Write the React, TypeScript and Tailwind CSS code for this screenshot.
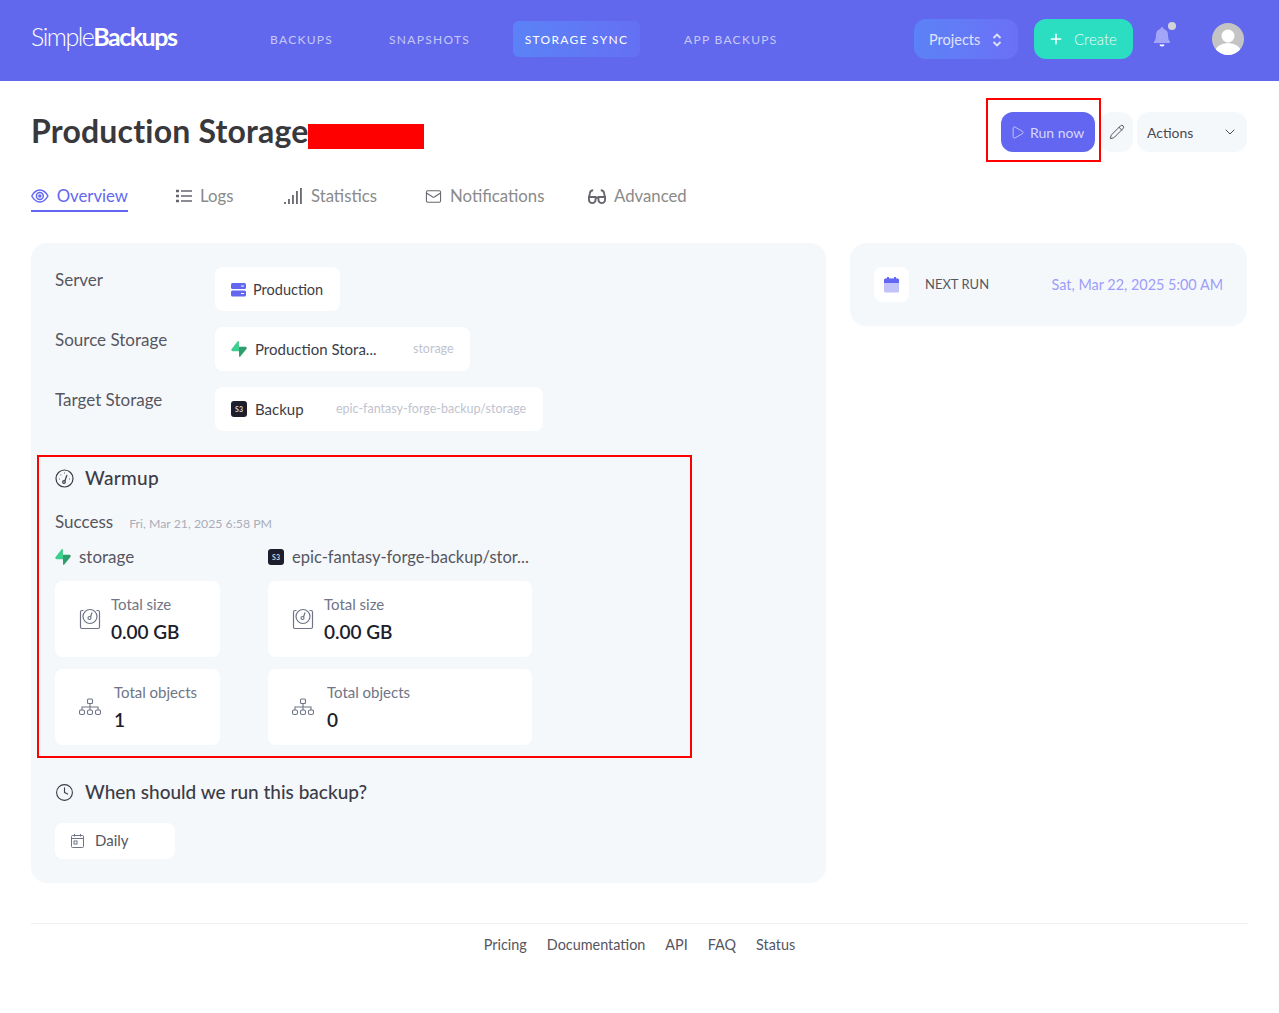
import { ChevronDown, Clock, Mail, Pencil, Play, Plus } from 'lucide-react'

function SupabaseIcon({ className }: { className: string }) {
  return (
    <svg className={className} viewBox="0 0 109 113" fill="none">
      <path d="M63.7 110.3C60.8 113.9 55 111.9 55 107.3L54 40.1H99.2C107.4 40.1 112 49.5 106.9 55.9L63.7 110.3Z" fill="#2f9e6f" />
      <path d="M45.3 2.1C48.2-1.5 54 .4 54 5L54.5 72.3H9.8C1.6 72.3-2.9 62.8 2.2 56.4L45.3 2.1Z" fill="#3ecf8e" />
    </svg>
  )
}

function S3Icon() {
  return (
    <span className="flex h-4 w-4 shrink-0 items-center justify-center rounded-[3px] bg-[#1d1d2b] text-[7px] font-bold text-[#d6d6dc]">
      S3
    </span>
  )
}

function DiskIcon() {
  return (
    <svg className="h-[22px] w-[22px] shrink-0 text-[#6f7486]" viewBox="0 0 22 22" fill="none" stroke="currentColor" strokeWidth="1.200">
      <path d="M4.500 2.500H3a1.500 1.500 0 0 0-1.500 1.500v15A1.500 1.500 0 0 0 3 20.500h16a1.500 1.500 0 0 0 1.500-1.500V4A1.500 1.500 0 0 0 19 2.500h-1.500" />
      <circle cx="11" cy="8.500" r="7" />
      <circle cx="10.500" cy="10" r="1.500" />
      <path d="M11.500 9l1.500-4.500" />
    </svg>
  )
}

function TreeIcon() {
  return (
    <svg className="h-[22px] w-[22px] shrink-0 text-[#6f7486]" viewBox="0 0 22 18" fill="none" stroke="currentColor" strokeWidth="1.100">
      <rect x="8.500" y="1" width="5" height="4.500" rx="1" />
      <rect x=".5" y="12" width="5" height="4.500" rx="1.500" />
      <rect x="8.500" y="12" width="5" height="4.500" rx="1.500" />
      <rect x="16.500" y="12" width="5" height="4.500" rx="1.500" />
      <path d="M11 5.500V12M3 12V9h16v3" />
    </svg>
  )
}

function StatCard({ wide, label, value, icon }: { wide?: boolean; label: string; value: string; icon: 'disk' | 'tree' }) {
  return (
    <div className={`flex h-[76px] items-center rounded-lg bg-white pl-6 ${wide ? 'w-[264px]' : 'w-[165px]'} ${icon === 'disk' ? 'gap-[10px]' : 'gap-[13px]'}`}>
      {icon === 'disk' ? <DiskIcon /> : <TreeIcon />}
      <div>
        <div className="text-[15px] leading-5 text-[#6f7486]">{label}</div>
        <div className="mt-[6px] text-[19px] leading-6 font-semibold text-[#1a202c]">{value}</div>
      </div>
    </div>
  )
}

function Tab({ icon, label, active, width }: { icon: React.ReactNode; label: string; active?: boolean; width: string }) {
  return (
    <div className={`flex h-[30px] items-center gap-2 border-b-2 text-[16.750px] whitespace-nowrap ${width} ${active ? 'border-[#6366f1] text-[#6366f1]' : 'border-transparent text-[#8a8a8a]'}`}>
      {icon}
      {label}
    </div>
  )
}

function Row({ label, children }: { label: string; children: React.ReactNode }) {
  return (
    <div className="flex">
      <div className="w-40 pt-[3px] text-[17px] leading-5 text-[#55565f]">{label}</div>
      {children}
    </div>
  )
}

export default function App() {
  return (
    <div className="relative min-h-[1013px] bg-white [font-family:Lato,sans-serif]">
      <header className="flex h-[81px] items-center bg-[#6268ed] pr-[35px] pb-[3px] pl-[31px]">
        <div className="mb-1 w-[239px] text-[25px] tracking-[-1.500px] text-white">
          <span className="font-light">Simple</span>
          <span className="font-bold">Backups</span>
        </div>
        <nav className="flex items-center text-[12px] tracking-[1.300px] text-[#c5c9f7]">
          <a className="w-[119px] pt-[2px]">BACKUPS</a>
          <a className="w-[124px] pt-[2px]">SNAPSHOTS</a>
          <a className="flex h-9 w-[127px] items-center justify-center rounded-md bg-gradient-to-r from-[#5b82f6] to-[#6470f3] pt-px text-white">STORAGE SYNC</a>
          <a className="ml-[44px] pt-[2px]">APP BACKUPS</a>
        </nav>
        <div className="ml-auto flex items-center">
          <button className="flex h-10 w-[104px] items-center justify-between rounded-xl bg-gradient-to-r from-[#5b82f6] to-[#6b70f6] pt-px pr-[14px] pl-[15px] text-[14.500px] text-[#e0e3fc]">
            Projects
            <svg className="h-[14px] w-[14px]" viewBox="0 0 14 14" fill="none" stroke="currentColor" strokeWidth="1.800"><path d="M3.500 5L7 1.500 10.500 5M3.500 9L7 12.500 10.500 9" /></svg>
          </button>
          <button className="ml-4 flex h-10 w-[99px] items-center gap-[10px] rounded-xl bg-[#2bddc1] pl-[14px] text-[15px] font-light text-[#f0fcfa]">
            <Plus className="h-[16px] w-[16px] text-white" strokeWidth={2.200} />
            Create
          </button>
          <div className="relative ml-[19px] h-6 w-6">
            <svg className="h-5 w-5 text-[#a3a6f8]" viewBox="0 0 20 20" fill="currentColor">
              <path d="M10 0a1.500 1.500 0 0 0-1.500 1.500v.6A6 6 0 0 0 4 8c0 4-1 5.500-2 6.500V16h16v-1.500c-1-1-2-2.500-2-6.500a6 6 0 0 0-4.500-5.900v-.6A1.500 1.500 0 0 0 10 0z" />
              <path d="M7.500 17.500h5a2.500 2 0 0 1-5 0z" fill="#fff" />
            </svg>
            <span className="absolute top-[-5px] right-0 h-2 w-2 rounded-full bg-[#d4d4d8]" />
          </div>
          <svg className="ml-[36px] h-8 w-8" viewBox="0 0 32 32">
            <clipPath id="avatar"><circle cx="16" cy="16" r="16" /></clipPath>
            <g clipPath="url(#avatar)">
              <rect width="32" height="32" fill="#c4c4c4" />
              <circle cx="16" cy="13" r="6.500" fill="#fff" />
              <ellipse cx="16" cy="29" rx="13" ry="9" fill="#fff" />
            </g>
          </svg>
        </div>
      </header>

      <main className="px-[31px]">
        <div className="flex h-[101px] items-center justify-between pr-px">
          <h1 className="-mt-px text-[32px] font-bold tracking-[0.200px] text-[#38383d]">Production Storage</h1>
          <div className="flex items-center">
            <button className="mr-[5px] flex h-10 w-[94px] items-center gap-[5px] rounded-xl bg-[#6366f1] pt-px pl-[9px] text-[14px] text-[#d6d8fb]">
              <Play className="h-[15px] w-[15px] text-[#d6d8fb]" strokeWidth={1.300} />
              Run now
            </button>
            <button className="mr-1 flex h-10 w-[33px] items-center justify-center rounded-xl bg-[#f5f8fb]">
              <Pencil className="h-4 w-4 text-[#3c3c46]" strokeWidth={1.300} />
            </button>
            <button className="flex h-10 w-[110px] items-center justify-between rounded-xl bg-[#f5f8fb] pt-px pr-[9px] pl-[10px] text-[14px] text-[#4a4a55]">
              Actions
              <ChevronDown className="h-4 w-4" strokeWidth={1.500} />
            </button>
          </div>
        </div>

        <div className="flex gap-12">
          <Tab
            active
            width="w-[97px]"
            label="Overview"
            icon={
              <svg className="h-[18px] w-[18px]" viewBox="0 0 18 18" fill="none" stroke="currentColor" strokeWidth="1.500">
                <path d="M.8 9C3 5 6 3 9 3s6 2 8.200 6C15 13 12 15 9 15S3 13 .8 9z" />
                <circle cx="9" cy="9" r="3.500" />
                <circle cx="9" cy="9" r="1" />
              </svg>
            }
          />
          <Tab
            width="w-[59px]"
            label="Logs"
            icon={
              <svg className="h-[16px] w-4 text-[#66666e]" viewBox="0 0 16 16" fill="none" stroke="currentColor" strokeWidth="1.600">
                <path d="M5 3h11M5 8h11M5 13h11" />
                <path d="M0 3h3M0 8h3M0 13h3" strokeWidth="2.500" />
              </svg>
            }
          />
          <Tab
            width="w-[94px]"
            label="Statistics"
            icon={
              <svg className="h-5 w-5 text-[#66666e]" viewBox="0 0 20 20" stroke="currentColor" strokeWidth="1.800">
                <path d="M2 18v-2M6 18v-5M10 18V9M14 18V5M18 18V2" />
              </svg>
            }
          />
          <Tab width="w-[115px]" label="Notifications" icon={<Mail className="h-[17px] w-[17px] shrink-0 text-[#66666e]" strokeWidth={1.500} />} />
          <Tab
            width="w-[100px]"
            label="Advanced"
            icon={
              <svg className="h-[18px] w-[18px] text-[#66666e]" viewBox="0 0 19 18" fill="none" stroke="currentColor" strokeWidth="2">
                <path d="M1 10h7v3a3.500 3.500 0 0 1-7 0zM11 10h7v3a3.500 3.500 0 0 1-7 0zM8 11h3" />
                <path d="M1 11L2 6Q2.500 3 5.500 3M18 11L17 6Q16.500 3 13.500 3" />
              </svg>
            }
          />
        </div>

        <div className="mt-[31px] flex items-start gap-6">
          <section className="h-[640px] w-[795px] rounded-2xl bg-[#f5f8fb] p-6">
            <div className="flex flex-col gap-4">
              <Row label="Server">
                <div className="flex h-11 w-[125px] items-center gap-[6px] rounded-lg bg-white pt-px pl-4 text-[14.500px] text-[#3c3c46]">
                  <svg className="h-[14px] w-4" viewBox="0 0 16 14" fill="#6366f1">
                    <rect y="0" width="15" height="6" rx="1.500" />
                    <rect y="7.500" width="15" height="6" rx="1.500" />
                    <rect x="10" y="2.500" width="3" height="1" fill="#fff" />
                    <rect x="10" y="10" width="3" height="1" fill="#fff" />
                  </svg>
                  Production
                </div>
              </Row>
              <Row label="Source Storage">
                <div className="flex h-11 w-[255px] items-center rounded-lg bg-white pl-4 text-[15px] text-[#3c3c46]">
                  <SupabaseIcon className="h-4 w-4" />
                  <span className="ml-2 w-[158px]">Production Stora...</span>
                  <span className="text-[12.500px] text-[#c0c4cf]">storage</span>
                </div>
              </Row>
              <Row label="Target Storage">
                <div className="flex h-11 w-[328px] items-center rounded-lg bg-white pl-4 text-[15px] text-[#3c3c46]">
                  <S3Icon />
                  <span className="ml-2 w-[81px]">Backup</span>
                  <span className="text-[12.500px] text-[#c0c4cf]">epic-fantasy-forge-backup/storage</span>
                </div>
              </Row>
            </div>

            <h2 className="mt-[35px] flex h-6 items-center gap-[11px] text-[19px] font-medium tracking-[0.300px] text-[#3c3c46]">
              <svg className="h-[19px] w-[19px]" viewBox="0 0 19 19" fill="none" stroke="currentColor" strokeWidth="1.200">
                <circle cx="9.500" cy="9.500" r="8.500" />
                <circle cx="9" cy="13" r="1.300" />
                <path d="M9.800 12L12 6M4 10h.8M5.500 6h.8M9 4h.8M14 10h.8" />
              </svg>
              Warmup
            </h2>

            <div className="mt-[19px] flex items-baseline gap-4">
              <span className="text-[17px] text-[#55565f]">Success</span>
              <span className="text-[12.300px] text-[#a9adb8]">Fri, Mar 21, 2025 6:58 PM</span>
            </div>

            <div className="mt-[10px] flex gap-12">
              <div className="flex w-[165px] flex-col gap-3">
                <div className="flex h-6 items-center gap-2 text-[17px] text-[#55565f]">
                  <SupabaseIcon className="h-4 w-4" />
                  storage
                </div>
                <StatCard icon="disk" label="Total size" value="0.00 GB" />
                <StatCard icon="tree" label="Total objects" value="1" />
              </div>
              <div className="flex w-[264px] flex-col gap-3">
                <div className="flex h-6 items-center gap-2 pt-px text-[16.500px] whitespace-nowrap text-[#55565f]">
                  <S3Icon />
                  epic-fantasy-forge-backup/stor...
                </div>
                <StatCard wide icon="disk" label="Total size" value="0.00 GB" />
                <StatCard wide icon="tree" label="Total objects" value="0" />
              </div>
            </div>

            <h2 className="mt-[36px] flex h-6 items-center gap-[11px] text-[19px] font-medium text-[#3c3c46]">
              <Clock className="h-[19px] w-[19px]" strokeWidth={1.400} />
              When should we run this backup?
            </h2>
            <div className="mt-[18px] flex h-9 w-[120px] items-center gap-[11px] rounded-lg bg-white pl-4 text-[15px] text-[#55565f]">
              <svg className="h-[14px] w-[13px] text-[#6f7486]" viewBox="0 0 13 14" fill="none" stroke="currentColor" strokeWidth="1">
                <rect x=".5" y="1.500" width="12" height="12" rx="1" />
                <path d="M.5 4.500h12M3.500 0v2.500M9.500 0v2.500" />
                <rect x="3" y="7" width="3" height="3" />
              </svg>
              Daily
            </div>
          </section>

          <aside className="flex h-[83px] w-[397px] items-center rounded-2xl bg-[#f5f8fb] px-6">
            <div className="flex h-[35px] w-[35px] items-center justify-center rounded-lg bg-white">
              <svg className="h-4 w-[15px]" viewBox="0 0 15 16">
                <rect y="1.500" width="15" height="14" rx="1.500" fill="#c2c2fa" />
                <path d="M0 3a1.500 1.500 0 0 1 1.500-1.500h12A1.500 1.500 0 0 1 15 3v3H0z" fill="#6366f1" />
                <rect x="3" width="2" height="3" fill="#6366f1" />
                <rect x="10" width="2" height="3" fill="#6366f1" />
              </svg>
            </div>
            <span className="ml-4 pt-px text-[13px] text-[#55565f]">NEXT RUN</span>
            <span className="ml-auto pt-px text-[14.400px] text-[#9d9dfa]">Sat, Mar 22, 2025 5:00 AM</span>
          </aside>
        </div>

        <footer className="mt-10 flex h-[43px] items-center justify-center gap-5 border-t border-[#eef0f3] text-[14.400px] text-[#55565f]">
          <a>Pricing</a>
          <a>Documentation</a>
          <a>API</a>
          <a>FAQ</a>
          <a>Status</a>
        </footer>
      </main>

      {/* red marks that sit on top of the screenshot */}
      <div className="absolute top-[124px] left-[308px] h-[25px] w-[116px] bg-[#ff0000]" />
      <div className="absolute top-[98px] left-[986px] h-[64px] w-[115px] border-2 border-[#ff0000]" />
      <div className="absolute top-[455px] left-[37px] h-[303px] w-[655px] border-2 border-[#ff0000]" />
    </div>
  )
}
